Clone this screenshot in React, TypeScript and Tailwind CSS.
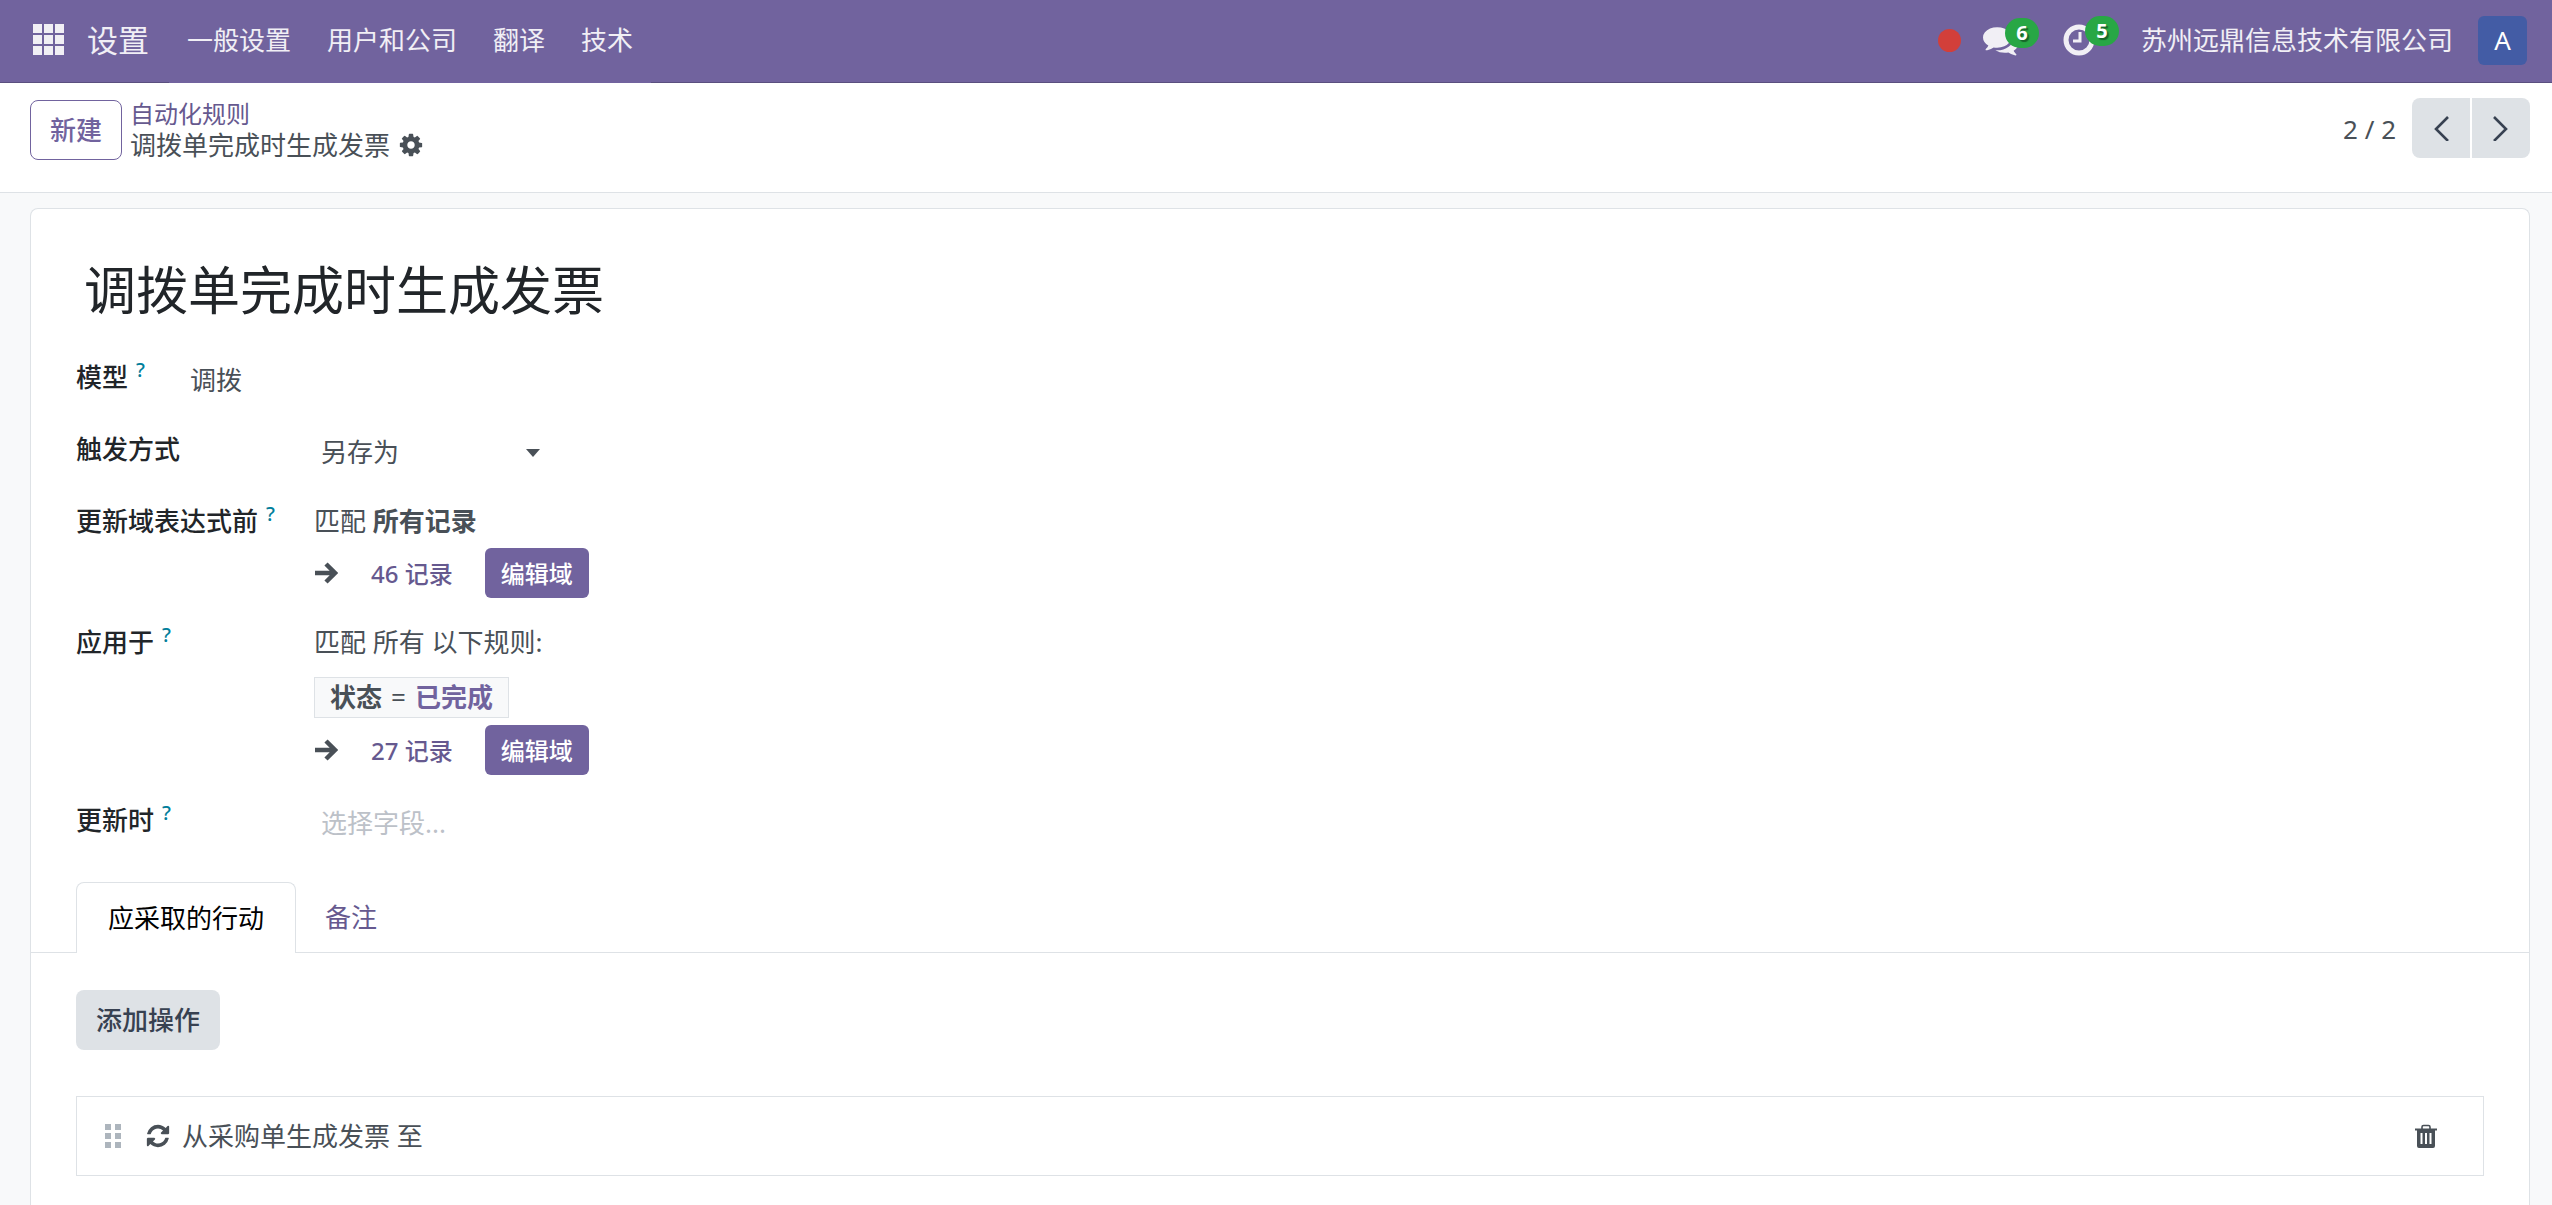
import type { ReactNode } from 'react';

const NAV_LINKS = ['一般设置', '用户和公司', '翻译', '技术'];

const COG =
  'M1152 896q0-106-75-181t-181-75-181 75-75 181 75 181 181 75 181-75 75-181zm512-109v222q0 12-8 23t-20 13l-185 28q-19 54-39 91 35 50 107 138 10 12 10 25t-9 23q-27 37-99 108t-94 71q-12 0-26-9l-138-108q-44 23-91 38-16 136-29 186-7 28-36 28h-222q-14 0-24.5-8.5t-11.5-21.5l-28-184q-49-16-90-37l-141 107q-10 9-25 9-14 0-25-11-126-114-165-168-7-10-7-23 0-12 8-23 15-21 51-66.5t54-70.5q-27-50-41-99l-183-27q-13-2-21-12.5t-8-23.5v-222q0-12 8-23t19-13l186-28q14-46 39-92-40-57-107-138-10-12-10-24 0-10 9-23 26-36 98.5-107.5t94.5-71.5q13 0 26 10l138 107q44-23 91-38 16-136 29-186 7-28 36-28h222q14 0 24.5 8.5t11.5 21.5l28 184q49 16 90 37l142-107q9-9 24-9 13 0 25 10 129 119 165 170 7 8 7 22 0 12-8 23-15 21-51 66.5t-54 70.5q26 50 41 98l183 28q13 2 21 12.5t8 23.5z';
const COMMENTS =
  'M1408 768q0 139-94 257t-256.5 186.5-353.5 68.5q-86 0-176-16-124 88-278 128-36 9-86 16h-3q-11 0-20.5-8t-11.5-21q-1-3-1-6.5t.5-6.5 2-6l2.5-5 3.5-5.5 4-5 4.5-5 4-4.5q5-6 23-25t26-29.5 22.5-29 25-38.5 20.5-44q-124-72-195-177t-71-224q0-139 94-257t256.5-186.5 353.5-68.5 353.5 68.5 256.5 186.5 94 257zm384 256q0 120-71 224.5t-195 176.5q10 24 20.5 44t25 38.5 22.5 29 26 29.5 23 25q1 1 4 4.5t4.5 5 4 5 3.5 5.5l2.5 5 2 6 .5 6.500-1 6.500q-3 14-13 22t-22 7q-50-7-86-16-154-40-278-128-90 16-176 16-271 0-472-132 58 4 88 4 161 0 309-45t264-129q125-92 192-212t67-254q0-77-23-152 129 71 204 178t75 230z';
const REFRESH =
  'M1639 1056q0 5-1 7-64 268-268 434.5t-478 166.5q-146 0-282.5-55t-243.5-157l-129 129q-19 19-45 19t-45-19-19-45v-448q0-26 19-45t45-19h448q26 0 45 19t19 45-19 45l-137 137q71 66 161 102t187 36q134 0 250-65t186-179q11-17 53-117 8-23 30-23h192q13 0 22.5 9.5t9.5 22.5zm25-800v448q0 26-19 45t-45 19h-448q-26 0-45-19t-19-45 19-45l138-138q-148-137-349-137-134 0-250 65t-186 179q-11 17-53 117-8 23-30 23h-199q-13 0-22.5-9.5t-9.5-22.5v-7q65-268 270-434.5t480-166.5q146 0 284 55.5t245 156.5l130-129q19-19 45-19t45 19 19 45z';

function Glyph({ d, className }: { d: string; className: string }) {
  return (
    <svg viewBox="0 0 1792 1792" fill="currentColor" className={className} aria-hidden="true">
      <path d={d} />
    </svg>
  );
}

function Chevron({ d }: { d: string }) {
  return (
    <svg viewBox="0 0 26 26" className="size-[26px]" fill="none" stroke="currentColor" strokeWidth="2.6" aria-hidden="true">
      <path d={d} />
    </svg>
  );
}

function Badge({ children }: { children: ReactNode }) {
  return (
    <span className="absolute bottom-[10px] left-[22px] flex h-[30px] w-[34px] items-center justify-center rounded-full bg-[#28a745] text-[20px] leading-none font-bold text-white [text-shadow:2px_2px_1px_rgba(0,0,0,0.4)]">
      {children}
    </span>
  );
}

function Navbar() {
  return (
    <header className="flex h-[83px] items-stretch border-b border-[#5a4f7f] bg-[#71639e] text-white/90">
      <button type="button" aria-label="应用" className="pr-[22px] pb-[2px] pl-[33px]">
        <svg viewBox="0 0 32 32" className="size-8" fill="currentColor" aria-hidden="true">
          <path d="M0 0h9v9H0zM11 0h9v9h-9zM22 0h9v9h-9zM0 11h9v9H0zM11 11h9v9h-9zM22 11h9v9h-9zM0 22h9v9H0zM11 22h9v9h-9zM22 22h9v9h-9z" />
        </svg>
      </button>
      <a href="#" className="flex items-center pr-5 pb-[2px] text-[31px]">设置</a>
      <nav className="-mb-px flex bg-[#71639e]">
        {NAV_LINKS.map((label) => (
          <a key={label} href="#" className="flex items-center px-[18px] pb-[2px]">{label}</a>
        ))}
      </nav>
      <div className="ml-auto flex items-center pr-[25px] pb-[2px]">
        <span className="size-[23px] rounded-full bg-[#d23f3a]" />
        <button type="button" aria-label="消息" className="relative ml-[22px]">
          <Glyph d={COMMENTS} className="size-9" />
          <Badge>6</Badge>
        </button>
        <button type="button" aria-label="活动" className="relative ml-[44px]">
          <svg viewBox="0 0 32 32" className="size-8" fill="none" stroke="currentColor" aria-hidden="true">
            <circle cx="16" cy="16" r="13" strokeWidth="5" />
            <path d="M17 8v9h-7" strokeWidth="3" />
          </svg>
          <Badge>5</Badge>
        </button>
        <span className="ml-[46px]">苏州远鼎信息技术有限公司</span>
        <button type="button" className="ml-[25px] size-[49px] rounded-md bg-[#435ca5] text-white">A</button>
      </div>
    </header>
  );
}

function ControlPanel() {
  return (
    <div className="flex h-[110px] items-start justify-between border-b border-[#dee2e6] bg-white pr-[22px] pl-[30px]">
      <div className="flex pt-[17px]">
        <button type="button" className="h-[60px] rounded-lg border border-[#71639e] px-[19px] font-medium text-[#71639e]">新建</button>
        <div className="-mt-px ml-2 flex flex-col">
          <a href="#" className="text-[24px] leading-[30px] text-[#66598f]">自动化规则</a>
          <div className="flex items-center gap-2 leading-8">
            <span>调拨单完成时生成发票</span>
            <button type="button" aria-label="设置"><Glyph d={COG} className="size-[26px]" /></button>
          </div>
        </div>
      </div>
      <div className="flex items-center pt-[15px]">
        <span className="mr-4 pt-[2px]">2 / 2</span>
        <div className="flex gap-[2px] text-[#374151]">
          <button type="button" aria-label="上一页" className="flex h-[60px] w-[58px] items-center justify-center rounded-l-lg bg-[#dee2e6]">
            <Chevron d="M20 2 8 14l12 12" />
          </button>
          <button type="button" aria-label="下一页" className="flex h-[60px] w-[58px] items-center justify-center rounded-r-lg bg-[#dee2e6]">
            <Chevron d="M6 2l12 12L6 26" />
          </button>
        </div>
      </div>
    </div>
  );
}

function Label({ text, help, htmlFor }: { text: string; help?: boolean; htmlFor?: string }) {
  return (
    <label htmlFor={htmlFor} className="flex font-medium text-[#212529]">
      {text}
      {help && <sup className="top-0 ml-2 text-[20px] leading-6 font-medium text-[#017e9b]">?</sup>}
    </label>
  );
}

function Records({ count }: { count: number }) {
  return (
    <div className="flex h-[50px] items-center">
      <svg viewBox="0 0 24 24" className="size-6" fill="none" stroke="currentColor" strokeWidth="4.500" aria-hidden="true">
        <path d="M1 12h19M12 3l9 9-9 9" />
      </svg>
      <a href="#" className="ml-[33px] text-[24px] font-medium text-[#66598f]">{count} 记录</a>
      <button type="button" className="ml-8 h-[50px] rounded-md bg-[#71639e] px-4 text-[24px] font-medium text-white">编辑域</button>
    </div>
  );
}

function RuleForm() {
  return (
    <div className="px-[45px]">
      <h1 className="pt-[42px] pl-2 text-[52px] leading-[78px] text-[#212529]">调拨单完成时生成发票</h1>
      <div className="mt-[29px] flex">
        <Label text="模型" help />
        <span className="ml-[45px] pt-[3px]">调拨</span>
      </div>
      <div className="mt-[30px] grid grid-cols-[238px_1fr] items-start">
        <Label text="触发方式" htmlFor="trigger" />
        <div className="flex w-[226px] items-center pt-[3px] pl-[7px]">
          <select id="trigger" className="w-full appearance-none bg-transparent">
            <option>另存为</option>
          </select>
          <svg viewBox="0 0 14 8" className="h-2 w-[14px] shrink-0" fill="currentColor" aria-hidden="true">
            <path d="M0 0h14L7 8z" />
          </svg>
        </div>

        <div className="mt-[30px]"><Label text="更新域表达式前" help /></div>
        <div className="mt-[30px]">
          <p>匹配 <b>所有记录</b></p>
          <div className="mt-[7px]"><Records count={46} /></div>
        </div>

        <div className="mt-[25px]"><Label text="应用于" help /></div>
        <div className="mt-[25px]">
          <p>匹配 所有 以下规则:</p>
          <div className="mt-[15px] flex h-[41px] w-fit items-center gap-[9px] border border-[#dee2e6] bg-[#f8f9fa] px-[15px]">
            <b>状态</b>
            <span>=</span>
            <b className="text-[#71639e]">已完成</b>
          </div>
          <div className="mt-[7px]"><Records count={27} /></div>
        </div>

        <div className="mt-[26px]"><Label text="更新时" help htmlFor="fields" /></div>
        <div className="mt-[29px] pl-[7px]">
          <input id="fields" placeholder="选择字段..." className="w-80 placeholder:text-[#bcc1c8]" />
        </div>
      </div>
    </div>
  );
}

function Tabs() {
  return (
    <div role="tablist" className="mt-[39px] flex border-b border-[#dee2e6] px-[45px]">
      <button type="button" role="tab" aria-selected="true" className="-mb-px h-[71px] rounded-t-lg border border-b-0 border-[#dee2e6] bg-white px-[31px] text-black">
        应采取的行动
      </button>
      <button type="button" role="tab" aria-selected="false" className="px-[29px] text-[#66598f]">备注</button>
    </div>
  );
}

function Actions() {
  return (
    <div className="px-[45px] pt-[37px]">
      <button type="button" className="h-[60px] rounded-lg bg-[#dee2e6] px-5 font-medium text-[#374151]">添加操作</button>
      <div className="mt-[46px] flex h-[80px] items-center border border-[#dee2e6] pr-[46px] pl-7">
        <svg viewBox="0 0 16 24" className="h-6 w-4 text-[#adb5bd]" fill="currentColor" aria-hidden="true">
          <path d="M0 0h6v6H0zM10 0h6v6h-6zM0 9h6v6H0zM10 9h6v6h-6zM0 18h6v6H0zM10 18h6v6h-6z" />
        </svg>
        <Glyph d={REFRESH} className="ml-6 size-[26px]" />
        <span className="ml-[11px]">从采购单生成发票 至</span>
        <button type="button" aria-label="删除" className="ml-auto">
          <svg viewBox="0 0 22 24" className="h-6 w-[22px]" fill="none" stroke="currentColor" aria-hidden="true">
            <path d="M7 5V3q0-1.500 1.500-1.500h5Q15 1.500 15 3v2" strokeWidth="1.600" />
            <path d="M0 5.500h22" strokeWidth="2" />
            <path fill="currentColor" fillRule="evenodd" stroke="none" d="M2 5h18v17q0 2-2 2H4q-2 0-2-2zM5.500 9v11h2V9zM10 9v11h2V9zM14.500 9v11h2V9z" />
          </svg>
        </button>
      </div>
    </div>
  );
}

export default function App() {
  return (
    <div className="flex min-h-screen flex-col bg-[#f8f9fa] font-['Noto_Sans','Noto_Sans_CJK_SC',sans-serif] text-[26px] leading-[39px] text-[#495057]">
      <Navbar />
      <ControlPanel />
      <main className="mt-[15px] mr-[22px] ml-[30px] flex-1 rounded-t-lg border border-b-0 border-[#dee2e6] bg-white">
        <RuleForm />
        <Tabs />
        <Actions />
      </main>
    </div>
  );
}
